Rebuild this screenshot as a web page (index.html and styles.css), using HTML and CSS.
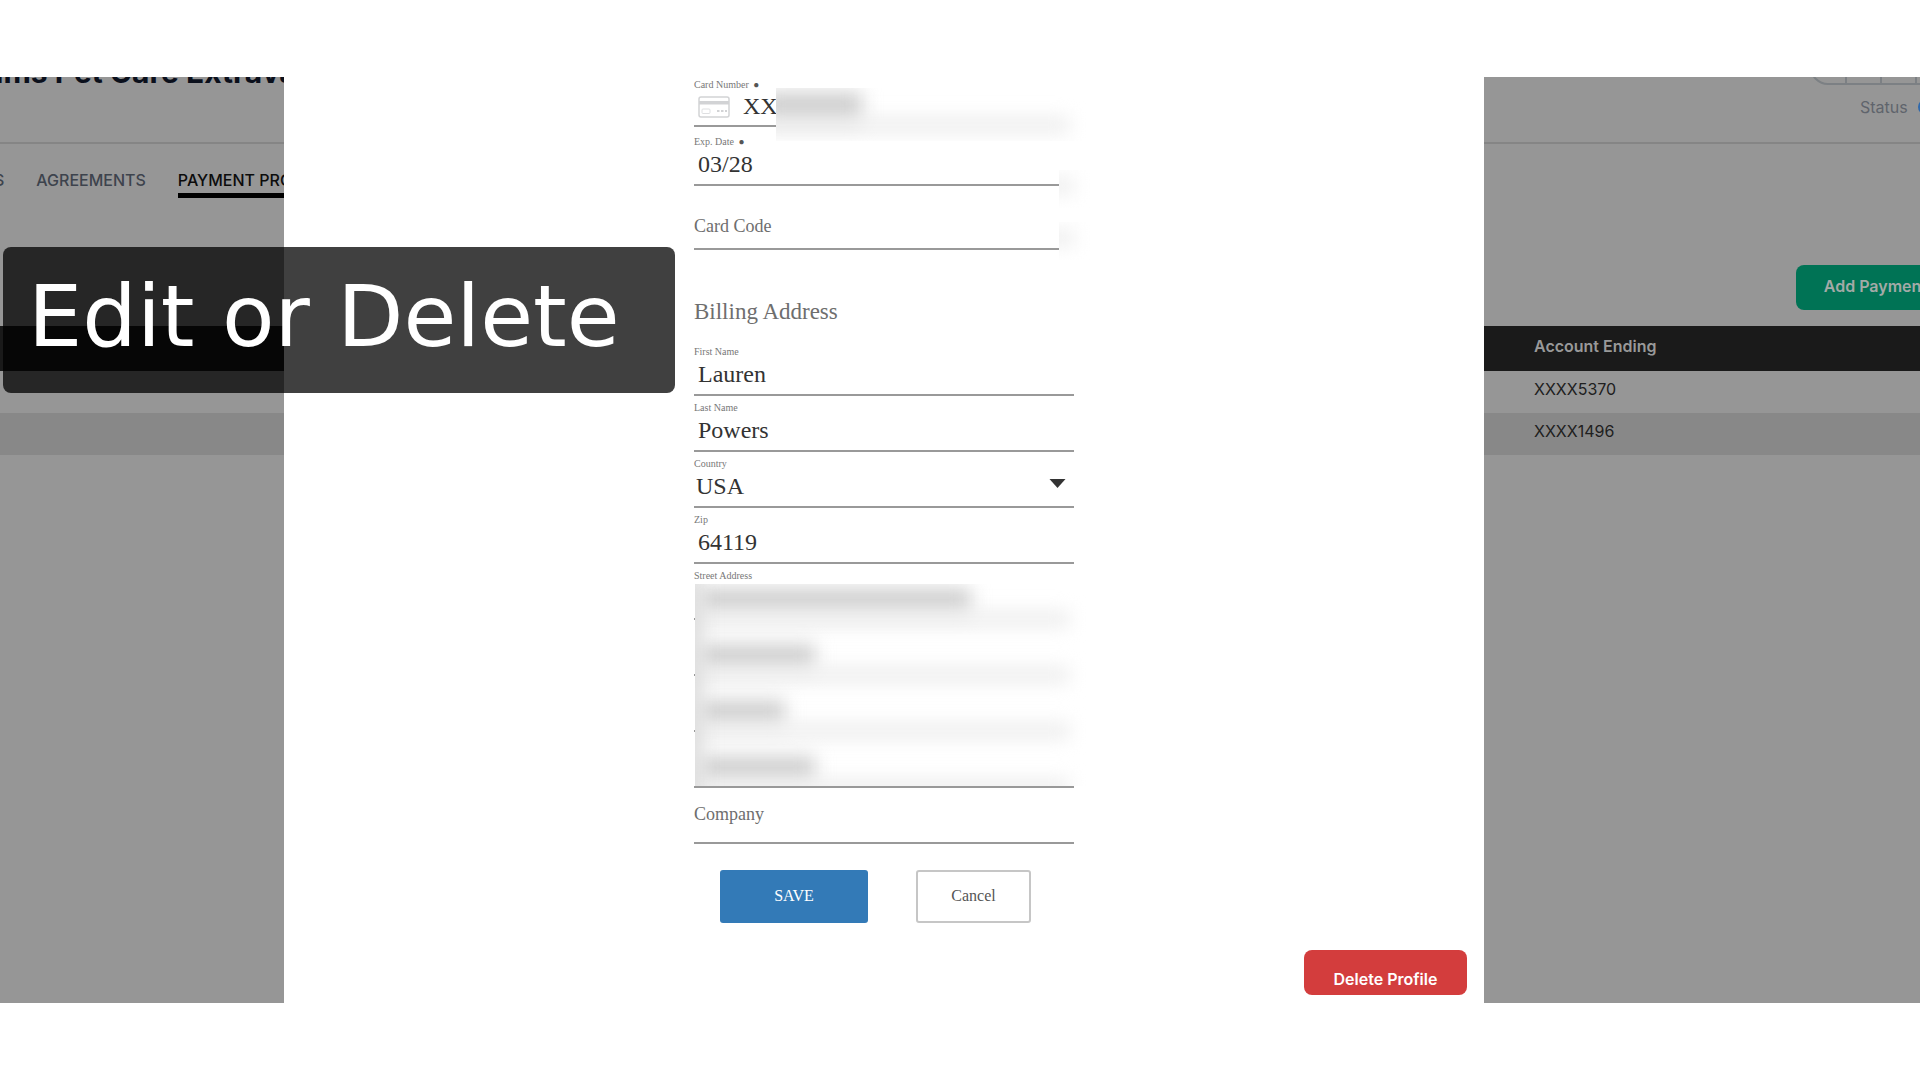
FILE: index.html
```html
<!DOCTYPE html>
<html lang="en">
<head>
<meta charset="utf-8">
<title>Edit payment profile</title>
<link rel="stylesheet" href="styles.css">
</head>
<body>
<main class="stage">
  <section class="account">
    <header class="account-header">
      <h1 class="account-title">ams Pet Care Extravaganza</h1>
      <div class="account-tools">
        <div class="tool-group"><span class="tool"></span><span class="tool"></span><span class="tool"></span><span class="tool"></span></div>
        <div class="status">Status <span class="status-dot"></span></div>
      </div>
    </header>
    <nav class="tabs">
      <a class="tab" href="#s">S</a>
      <a class="tab" href="#agreements">AGREEMENTS</a>
      <a class="tab tab-active" href="#payment">PAYMENT PROFILES</a>
    </nav>
    <div class="actions"><button class="add" type="button">Add Payment</button></div>
    <table class="profiles">
      <thead><tr><th class="col-name"></th><th>Account Ending</th></tr></thead>
      <tbody>
        <tr><td></td><td>XXXX5370</td></tr>
        <tr><td></td><td>XXXX1496</td></tr>
      </tbody>
    </table>
  </section>

  <section class="modal">
    <form class="form">
      <div class="field field-card">
        <label class="label" for="card">Card Number <span class="required">●</span></label>
        <div class="control">
          <svg class="card-icon" viewBox="0 0 32 22" aria-hidden="true">
            <rect x="1" y="1" width="30" height="20" rx="2" fill="#fff" stroke="#d2d3d5" stroke-width="1.5"/>
            <path d="M1 5h30v3.500H1z" fill="#d2d3d5"/>
            <rect x="4" y="13" width="8" height="4.500" rx="1" fill="none" stroke="#dedfe1"/>
            <path d="M19 15h2.500M23 15h2.500M27 15h2" stroke="#d2d3d5" stroke-width="2"/>
          </svg>
          <input class="input" id="card" type="text" value="XX">
        </div>
        <div class="redact redact-card"><span class="smear smear-card"></span><span class="smear-line"></span></div>
      </div>
      <div class="field field-exp">
        <label class="label" for="exp">Exp. Date <span class="required">●</span></label>
        <input class="input" id="exp" type="text" value="03/28">
        <div class="redact redact-end"><span class="smear-line"></span></div>
      </div>
      <div class="field field-code">
        <input class="input input-empty" type="text" placeholder="Card Code" aria-label="Card Code">
        <div class="redact redact-end"><span class="smear-line"></span></div>
      </div>

      <h2 class="section-title">Billing Address</h2>

      <div class="field">
        <label class="label" for="first">First Name</label>
        <input class="input" id="first" type="text" value="Lauren">
      </div>
      <div class="field">
        <label class="label" for="last">Last Name</label>
        <input class="input" id="last" type="text" value="Powers">
      </div>
      <div class="field">
        <label class="label" for="country">Country</label>
        <select class="input input-select" id="country"><option>USA</option></select>
        <svg class="arrow" viewBox="0 0 16 9" aria-hidden="true"><path d="M0 0h16L8 9z" fill="#333"/></svg>
      </div>
      <div class="field">
        <label class="label" for="zip">Zip</label>
        <input class="input" id="zip" type="text" value="64119">
      </div>
      <div class="private">
        <div class="field">
          <label class="label" for="street">Street Address</label>
          <input class="input" id="street" type="text">
        </div>
        <div class="field"><input class="input" type="text" aria-label="City"></div>
        <div class="field"><input class="input" type="text" aria-label="State"></div>
        <div class="field"><input class="input" type="text" aria-label="Phone"></div>
        <div class="redact redact-address">
          <div class="smear-row"><span class="smear smear-street"></span><span class="smear-line"></span></div>
          <div class="smear-row"><span class="smear smear-city"></span><span class="smear-line"></span></div>
          <div class="smear-row"><span class="smear smear-state"></span><span class="smear-line"></span></div>
          <div class="smear-row"><span class="smear smear-city"></span><span class="smear-line"></span></div>
          <span class="smear-edge"></span>
        </div>
      </div>
      <div class="field field-company">
        <input class="input input-empty" type="text" placeholder="Company" aria-label="Company">
      </div>
      <div class="buttons">
        <button class="save" type="button">SAVE</button>
        <button class="cancel" type="button">Cancel</button>
      </div>
    </form>
    <button class="delete" type="button">Delete Profile</button>
  </section>

  <div class="caption">Edit or Delete</div>
</main>
</body>
</html>
```
FILE: styles.css
```css
* {
  box-sizing: border-box;
}

body {
  margin: 0;
  background: #fff;
  font: 16px/20px Inter, sans-serif;
}

.stage {
  position: relative;
  display: grid;
  margin: 77px 0;
  overflow: hidden;
}

/* Dimmed account page */
.account {
  grid-area: 1 / 1;
  min-width: 0;
  background: #969696;
}

.account-header {
  display: flex;
  justify-content: space-between;
  height: 67px;
  border-bottom: 2px solid #858585;
}

.account-title {
  margin: -21px 0 0 -14px;
  color: #0b101c;
  font-size: 30px;
  font-weight: 700;
  line-height: 32px;
}

.account-tools {
  margin: -28px -18px 0 0;
}

.tool-group {
  display: flex;
  width: 128px;
  height: 36px;
  overflow: hidden;
  border: 2px solid #7c8084;
  border-radius: 18px;
}

.tool {
  width: 35px;
  flex: none;
  border-right: 2px solid #7c8084;
}

.status {
  display: flex;
  align-items: center;
  gap: 10px;
  margin: 12px 0 0 50px;
  color: #5f646c;
}

.status-dot {
  width: 16px;
  height: 16px;
  border-radius: 50%;
  background: #2f69ad;
}

.tabs {
  display: flex;
  gap: 32px;
  margin: 26px 0 0 -6px;
}

.tab {
  padding-bottom: 3px;
  border-bottom: 5px solid transparent;
  color: #3d434d;
  font-weight: 500;
  text-decoration: none;
}

.tab-active {
  border-color: #000;
  color: #0c0c0c;
}

.actions {
  display: flex;
  justify-content: flex-end;
  margin: 67px -36px 0 0;
}

.add {
  height: 45px;
  padding: 0 29px 3px 28px;
  border: 0;
  border-radius: 8px;
  background: #007355;
  color: #a3aaa7;
  font: 600 16px/20px Inter, sans-serif;
}

.profiles {
  width: 100%;
  margin-top: 16px;
  border-collapse: collapse;
  color: #202020;
  text-align: left;
}

.profiles th,
.profiles td {
  height: 42px;
  padding: 0 0 6px;
}

.profiles th {
  height: 45px;
  background: #1a1a1a;
  color: #999;
  font-weight: 600;
}

.profiles .col-name {
  width: 1534px;
}

.profiles tr:nth-child(even) {
  background: #888;
}

/* Edit dialog */
.modal {
  grid-area: 1 / 1;
  display: flex;
  flex-direction: column;
  z-index: 1;
  margin: 0 436px 0 284px;
  padding-bottom: 8px;
  background: #fff;
}

.form {
  width: 380px;
  margin: -6px auto 0;
  font-family: "Liberation Serif", serif;
}

.field {
  position: relative;
  display: flex;
  flex-direction: column;
  justify-content: flex-end;
  height: 56px;
  padding-bottom: 3px;
  border-bottom: 2px solid #999;
}

.field-card {
  padding-bottom: 1px;
}

.field-exp {
  margin-top: 3px;
}

.field-code {
  height: 64px;
  padding-bottom: 5px;
}

.field-company {
  padding-bottom: 11px;
}

.label {
  color: #777;
  font-size: 10px;
  line-height: 12px;
}

.required {
  margin-left: 2px;
  color: #555;
  font-size: 10px;
}

.control {
  display: flex;
  align-items: center;
  padding-left: 4px;
}

.control .input {
  padding-bottom: 2px;
}

.card-icon {
  width: 32px;
  height: 22px;
  flex: none;
  margin: 0 9px 2px 0;
}

.input {
  width: 100%;
  height: 33px;
  padding: 0 4px;
  border: 0;
  outline: 0;
  background: transparent;
  color: #333;
  font: 24px/28px "Liberation Serif", serif;
}

.input-select {
  padding: 0 2px 2px;
  appearance: none;
}

.input-empty {
  padding: 0;
  font-size: 18px;
}

.input-empty::placeholder {
  color: #6e6e6e;
  opacity: 1;
}

.arrow {
  position: absolute;
  right: 8px;
  bottom: 18px;
  width: 17px;
  height: 9px;
}

.section-title {
  margin: 0;
  padding: 49px 0 15px;
  color: #6e6e6e;
  font-size: 23px;
  font-weight: 400;
  line-height: 26px;
}

/* Masked personal details */
.private {
  position: relative;
}

.redact {
  position: absolute;
  overflow: hidden;
  background: #fff;
}

.redact-card {
  top: 17px;
  right: -12px;
  bottom: -16px;
  left: 82px;
}

.redact-end {
  right: -16px;
  bottom: -24px;
  width: 31px;
  height: 38px;
}

.field-code .redact-end {
  bottom: -12px;
}

.redact-address {
  top: 20px;
  right: -12px;
  bottom: 2px;
  left: 1px;
}

.smear-row {
  position: relative;
  height: 56px;
}

.smear,
.smear-line,
.smear-edge {
  position: absolute;
  filter: blur(9px);
}

.smear {
  top: 4px;
  left: 4px;
  height: 26px;
  background: #d0d0d0;
}

.smear-line {
  right: 16px;
  bottom: 8px;
  left: -24px;
  height: 16px;
  background: #eee;
}

.smear-row .smear-line {
  bottom: 13px;
}

.redact-end .smear-line {
  bottom: 14px;
}

.smear-card {
  left: -12px;
  width: 98px;
  height: 32px;
}

.smear-street {
  width: 272px;
}

.smear-city {
  width: 116px;
}

.smear-state {
  width: 86px;
}

.smear-edge {
  top: -12px;
  bottom: -12px;
  left: -12px;
  width: 20px;
  background: #dcdcdc;
}

.buttons {
  display: flex;
  gap: 48px;
  margin: 26px 0 0 26px;
}

.save,
.cancel {
  width: 148px;
  height: 53px;
  padding: 0 0 2px;
  border: 0;
  border-radius: 3px;
  background: #337ab7;
  color: #fff;
  font: 16px/20px "Liberation Serif", serif;
}

.cancel {
  width: 115px;
  border: 2px solid #c6c6c6;
  background: #fff;
  color: #555;
}

.delete {
  align-self: flex-end;
  width: 163px;
  height: 45px;
  margin: 27px 17px 0 0;
  padding: 12px 0 0;
  border: 0;
  border-radius: 8px;
  background: #d33d3d;
  color: #fff;
  font: 600 16px/20px Inter, sans-serif;
}

/* Tutorial caption */
.caption {
  position: absolute;
  z-index: 2;
  top: 170px;
  left: 3px;
  width: 672px;
  padding: 14px 25px 22px;
  border-radius: 8px;
  background: rgba(0, 0, 0, 0.75);
  color: #fff;
  font: 400 86px/110px "DejaVu Sans", sans-serif;
  white-space: nowrap;
}
```
